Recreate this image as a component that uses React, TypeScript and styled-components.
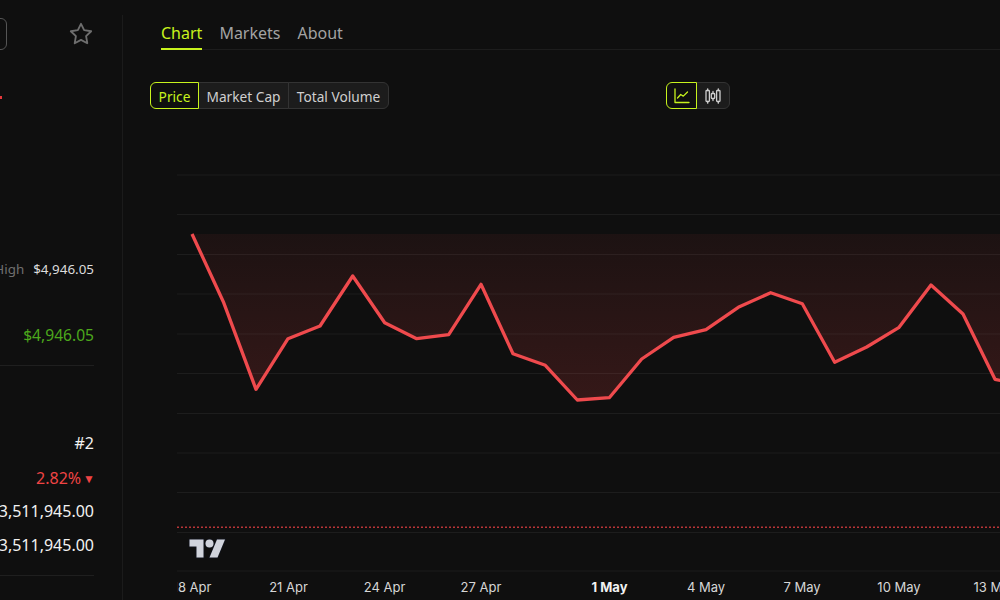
import React from "react";
import styled, { createGlobalStyle } from "styled-components";

const Global = createGlobalStyle`
  html, body { margin: 0; padding: 0; background: #0f0f0f; }
  * { box-sizing: border-box; }
`;

const Page = styled.div`
  width: 1000px;
  height: 600px;
  display: flex;
  overflow: hidden;
  background: #0f0f0f;
  font-family: "Noto Sans", "Open Sans", sans-serif;
`;

const Sidebar = styled.aside`
  position: relative;
  flex: 0 0 123px;
  width: 123px;
  height: 600px;
  padding: 18px 29px 0 0;
  display: flex;
  flex-direction: column;
  align-items: flex-end;
  overflow: hidden;
`;

const SidebarRule = styled.div`
  position: absolute;
  right: 0;
  top: 15px;
  bottom: 0;
  width: 1px;
  background: #1b1b1b;
`;

const Header = styled.div`
  display: flex;
  align-items: center;
  gap: 61px;
  height: 32px;
  flex: none;
`;

const ClippedButton = styled.div`
  width: 120px;
  height: 32px;
  border: 1px solid #555;
  border-radius: 6px;
`;

const StarIcon = styled.svg`
  width: 26px;
  height: 26px;
  fill: none;
  stroke: #6e6e6e;
  stroke-width: 1.7;
  stroke-linejoin: round;
  flex: none;
`;

const DeltaMark = styled.div`
  width: 96px;
  height: 3px;
  margin: 46px 92px 0 0;
  flex: none;
  border-right: 2px solid #e5383b;
`;

const Row = styled.div<{ $top: number; $size: number; $color: string }>`
  display: flex;
  align-items: center;
  justify-content: flex-end;
  gap: 9px;
  flex: none;
  white-space: nowrap;
  margin-top: ${(p) => p.$top}px;
  height: 24px;
  font-size: ${(p) => p.$size}px;
  color: ${(p) => p.$color};
`;

const Label = styled.span`
  color: #6f6f6f;
`;

const Caret = styled.span`
  font-size: 12px;
  margin: 0 -1px 0 -7px;
`;

const Divider = styled.div<{ $top: number }>`
  width: 300px;
  height: 1px;
  flex: none;
  margin-top: ${(p) => p.$top}px;
  background: #1f1f1f;
`;

const Main = styled.main`
  flex: 1;
  min-width: 0;
  height: 600px;
  display: flex;
  flex-direction: column;
  overflow: hidden;
`;

const Tabs = styled.nav`
  display: flex;
  gap: 17px;
  height: 50px;
  margin-left: 38px;
  padding-top: 21px;
  border-bottom: 1px solid #1d1d1d;
  flex: none;
`;

const Tab = styled.div<{ $active?: boolean }>`
  height: 29px;
  font-size: 16px;
  line-height: 25px;
  color: ${(p) => (p.$active ? "#c8f31d" : "#a3a3a3")};
  border-bottom: 2px solid ${(p) => (p.$active ? "#c8f31d" : "transparent")};
`;

const Toolbar = styled.div`
  display: flex;
  align-items: center;
  margin: 32px 0 0 27px;
  flex: none;
`;

const Segmented = styled.div<{ $gap?: number }>`
  display: flex;
  height: 27px;
  margin-left: ${(p) => p.$gap ?? 0}px;
`;

const SegButton = styled.div<{ $active?: boolean; $first?: boolean; $last?: boolean; $w: number }>`
  display: flex;
  align-items: center;
  justify-content: center;
  width: ${(p) => p.$w}px;
  height: 27px;
  padding-top: 1px;
  margin-left: ${(p) => (p.$first ? 0 : -1)}px;
  position: relative;
  z-index: ${(p) => (p.$active ? 1 : 0)};
  font-size: 13.7px;
  color: ${(p) => (p.$active ? "#c8f31d" : "#cfcfcf")};
  background: ${(p) => (p.$active ? "#0f0f0f" : "#1c1c1c")};
  border: 1px solid ${(p) => (p.$active ? "#c8f31d" : "#333")};
  border-radius: ${(p) =>
    p.$first ? "6px 0 0 6px" : p.$last ? "0 6px 6px 0" : "0"};
`;

const ToggleIcon = styled.svg<{ $color: string }>`
  width: 20px;
  height: 20px;
  fill: none;
  stroke: ${(p) => p.$color};
  stroke-width: 1.3;
  stroke-linecap: round;
  stroke-linejoin: round;
`;

const ChartSvg = styled.svg`
  display: block;
  width: 877px;
  height: 491px;
  flex: none;
`;

const AxisLabel = styled.text<{ $bold?: boolean }>`
  font-family: Inter, "Liberation Sans", sans-serif;
  font-size: 13px;
  font-weight: ${(p) => (p.$bold ? 700 : 400)};
  fill: ${(p) => (p.$bold ? "#f2f2f2" : "#d6d6d6")};
  text-anchor: middle;
`;

const grid = [175, 214.5, 254.5, 294, 334, 373.5, 413.5, 453, 492.5, 532.5, 571];

const pts: [number, number][] = [
  [192, 234], [223.3, 301.7], [256, 389.3], [288, 338.7], [320, 326], [352.7, 276],
  [384.7, 322.7], [416.7, 338.7], [448.7, 334.7], [481, 284.3], [513, 353.7],
  [545.3, 365.3], [577.3, 400], [609.3, 397.7], [641.7, 359], [673.7, 337.3],
  [706, 329.7], [738.3, 307.3], [770.7, 292.7], [802.3, 303.7], [834.7, 362.3],
  [866.7, 347], [898.7, 327.7], [931, 285], [963, 314], [995, 379.3], [1027, 386],
];
const linePoints = pts.map((p) => p.join(",")).join(" ");
const areaPoints = `${linePoints} 1027,234 192,234`;

const ticks: { x: number; t: string; bold?: boolean }[] = [
  { x: 192, t: "18 Apr" },
  { x: 288.5, t: "21 Apr" },
  { x: 384.5, t: "24 Apr" },
  { x: 481, t: "27 Apr" },
  { x: 609.5, t: "1 May", bold: true },
  { x: 706, t: "4 May" },
  { x: 802, t: "7 May" },
  { x: 899, t: "10 May" },
  { x: 995, t: "13 May" },
];

export default function App() {
  return (
    <Page>
      <Global />
      <Sidebar>
        <SidebarRule />
        <Header>
          <ClippedButton />
          <StarIcon viewBox="0 0 24 24">
            <path d="M12 2.6l2.9 5.9 6.5.95-4.7 4.58 1.1 6.47L12 17.45 6.2 20.5l1.1-6.47L2.6 9.45l6.5-.95z" />
          </StarIcon>
        </Header>
        <DeltaMark />
        <Row $top={158} $size={13.4} $color="#dcdcdc">
          <Label>24h High</Label>
          $4,946.05
        </Row>
        <Row $top={42} $size={15.6} $color="#4ca81c">$4,946.05</Row>
        <Divider $top={18} />
        <Row $top={65} $size={16} $color="#f2f2f2">#2</Row>
        <Row $top={11} $size={16} $color="#ef4444">
          2.82% <Caret>▼</Caret>
        </Row>
        <Row $top={9} $size={16} $color="#f2f2f2">$133,511,945.00</Row>
        <Row $top={10} $size={16} $color="#f2f2f2">$133,511,945.00</Row>
        <Divider $top={18} />
      </Sidebar>
      <Main>
        <Tabs>
          <Tab $active>Chart</Tab>
          <Tab>Markets</Tab>
          <Tab>About</Tab>
        </Tabs>
        <Toolbar>
          <Segmented>
            <SegButton $first $active $w={49}>Price</SegButton>
            <SegButton $w={91}>Market Cap</SegButton>
            <SegButton $last $w={101}>Total Volume</SegButton>
          </Segmented>
          <Segmented $gap={277}>
            <SegButton $first $active $w={31}>
              <ToggleIcon $color="#c8f31d" viewBox="0 0 20 20">
                <path d="M3 3v13.5h14" />
                <path d="M5.5 12l3.2-3.5 2.6 1.6 4.2-4.1" />
              </ToggleIcon>
            </SegButton>
            <SegButton $last $w={34}>
              <ToggleIcon $color="#cfcfcf" viewBox="0 0 20 20">
                <rect x="3" y="4.5" width="3.4" height="11" rx="0.8" />
                <path d="M4.7 2.8v1.7M4.7 15.5v1.7" />
                <rect x="8.3" y="7.5" width="3.4" height="5" rx="0.8" />
                <path d="M10 5.5v2M10 12.5v2" />
                <rect x="13.6" y="4.5" width="3.4" height="11" rx="0.8" />
                <path d="M15.3 2.8v1.7M15.3 15.5v1.7" />
              </ToggleIcon>
            </SegButton>
          </Segmented>
        </Toolbar>
        <ChartSvg viewBox="123 109 877 491">
          <defs>
            <linearGradient id="area" gradientUnits="userSpaceOnUse" x1="0" y1="234" x2="0" y2="400">
              <stop offset="0" stopColor="#ef4444" stopOpacity="0.06" />
              <stop offset="1" stopColor="#ef4444" stopOpacity="0.17" />
            </linearGradient>
            <clipPath id="plot">
              <rect x="177" y="109" width="823" height="491" />
            </clipPath>
          </defs>
          <polygon points={areaPoints} fill="url(#area)" />
          {grid.map((y) => (
            <line key={y} x1="177" x2="1000" y1={y} y2={y} stroke="#ffffff" strokeOpacity="0.06" strokeWidth="1" />
          ))}
          <line x1="177" x2="1000" y1="527.2" y2="527.2" stroke="#b83537" strokeWidth="1.6" strokeDasharray="2 2" />
          <polyline points={linePoints} fill="none" stroke="#ef4a4d" strokeWidth="3.3" strokeLinejoin="round" />
          <g transform="translate(189.5 535.5)">
            <path
              d="M14 22H7V11H0V4h14v18zM28 22h-8l7.5-18h8L28 22z"
              fill="#d1d4dc"
              stroke="#131722"
              strokeWidth="1.4"
              paintOrder="stroke"
            />
            <circle cx="20" cy="8" r="4" fill="#d1d4dc" stroke="#131722" strokeWidth="1.4" paintOrder="stroke" />
          </g>
          <g clipPath="url(#plot)">
            {ticks.map((t) => (
              <AxisLabel key={t.t} x={t.x} y={592} $bold={t.bold}>
                {t.t}
              </AxisLabel>
            ))}
          </g>
        </ChartSvg>
      </Main>
    </Page>
  );
}
